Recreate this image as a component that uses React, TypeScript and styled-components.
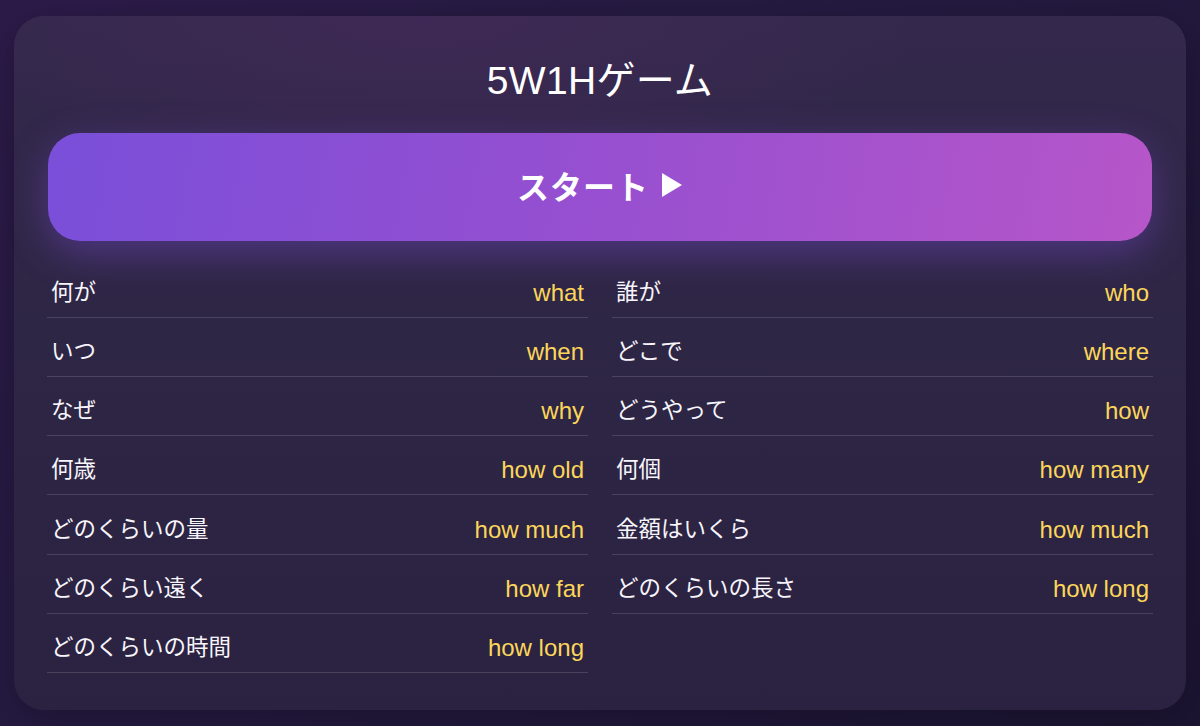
import React from "react";
import styled, { createGlobalStyle } from "styled-components";

const GlobalStyle = createGlobalStyle`
  html, body {
    margin: 0;
    padding: 0;
    height: 100%;
  }
  body {
    background: linear-gradient(135deg, #2c1b49 0%, #241a40 50%, #1c1533 100%);
    font-family: "Liberation Sans", "Noto Sans CJK JP", sans-serif;
    color: #f4f2f8;
  }
`;

const Page = styled.div`
  box-sizing: border-box;
  width: 1200px;
  height: 726px;
  padding: 16px 14px;
`;

const Card = styled.section`
  box-sizing: border-box;
  height: 694px;
  border-radius: 30px;
  padding: 42px 33px 37px;
  background:
    radial-gradient(ellipse 60% 35% at 35% 0%, rgba(90, 40, 110, 0.28), transparent 70%),
    linear-gradient(180deg, #34294c 0%, #2e2645 45%, #2a2240 100%);
  box-shadow: 0 10px 40px rgba(0, 0, 0, 0.25);
  display: flex;
  flex-direction: column;
`;

const Title = styled.h1`
  margin: 0 0 29px;
  text-align: center;
  font-size: 39px;
  line-height: 46px;
  font-weight: 400;
  color: #ffffff;
  letter-spacing: 0.3px;
`;

const StartButton = styled.button`
  height: 108px;
  margin: 0 1px;
  padding: 0 0 4px;
  border: none;
  border-radius: 32px;
  background: linear-gradient(100deg, #7a4fd9 0%, #944fd1 45%, #b656c9 100%);
  box-shadow: 0 12px 38px rgba(124, 77, 214, 0.42);
  color: #ffffff;
  font-family: inherit;
  font-size: 32px;
  font-weight: 700;
  letter-spacing: 1px;
  cursor: pointer;
  display: flex;
  align-items: center;
  justify-content: center;
  gap: 12px;
`;

const PlayIcon = styled.svg`
  width: 22px;
  height: 26px;
  margin-top: 1px;
`;

const WordGrid = styled.div`
  margin-top: 18px;
  display: grid;
  grid-template-columns: 1fr 1fr;
  column-gap: 24px;
`;

const WordRow = styled.div`
  display: flex;
  justify-content: space-between;
  align-items: center;
  padding: 22.2px 4px 12px;
  height: 24px;
  border-bottom: 1px solid rgba(255, 255, 255, 0.14);
`;

const Japanese = styled.span`
  font-size: 22.5px;
  line-height: 24px;
  color: #f7f5fb;
`;

const English = styled.span`
  font-size: 24px;
  line-height: 24px;
  color: #fbd65a;
`;

const words: [string, string][] = [
  ["何が", "what"],
  ["誰が", "who"],
  ["いつ", "when"],
  ["どこで", "where"],
  ["なぜ", "why"],
  ["どうやって", "how"],
  ["何歳", "how old"],
  ["何個", "how many"],
  ["どのくらいの量", "how much"],
  ["金額はいくら", "how much"],
  ["どのくらい遠く", "how far"],
  ["どのくらいの長さ", "how long"],
  ["どのくらいの時間", "how long"],
];

export default function App() {
  return (
    <>
      <GlobalStyle />
      <Page>
        <Card>
          <Title>5W1Hゲーム</Title>
          <StartButton>
            スタート
            <PlayIcon viewBox="0 0 22 26" aria-hidden="true">
              <path d="M1 1 L21 13 L1 25 Z" fill="#ffffff" />
            </PlayIcon>
          </StartButton>
          <WordGrid>
            {words.map(([ja, en], i) => (
              <WordRow key={i}>
                <Japanese>{ja}</Japanese>
                <English>{en}</English>
              </WordRow>
            ))}
          </WordGrid>
        </Card>
      </Page>
    </>
  );
}
